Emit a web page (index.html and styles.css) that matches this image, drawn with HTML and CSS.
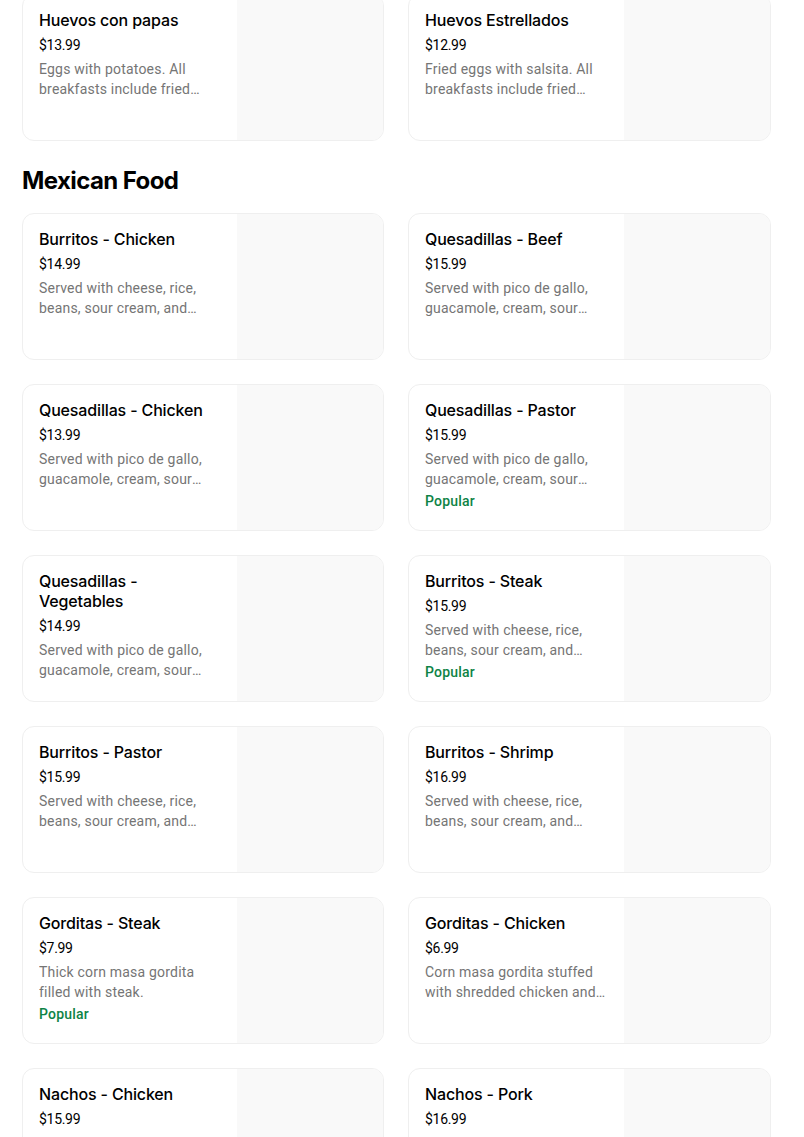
FILE: index.html
```html
<!DOCTYPE html>
<html lang="en">
<head>
<meta charset="utf-8">
<link rel="stylesheet" href="styles.css">
</head>
<body>
<main class="menu">
  <section class="grid grid-top">
    <article class="card">
      <div class="info">
        <h3 class="title">Huevos con papas</h3>
        <div class="price">$13.99</div>
        <p class="desc">Eggs with potatoes. All breakfasts include fried beans and tortillas.</p>
      </div>
      <div class="thumb"></div>
    </article>
    <article class="card">
      <div class="info">
        <h3 class="title">Huevos Estrellados</h3>
        <div class="price">$12.99</div>
        <p class="desc">Fried eggs with salsita. All breakfasts include fried beans and tortillas.</p>
      </div>
      <div class="thumb"></div>
    </article>
  </section>

  <h2 class="section-title">Mexican Food</h2>

  <section class="grid">
    <article class="card">
      <div class="info">
        <h3 class="title">Burritos - Chicken</h3>
        <div class="price">$14.99</div>
        <p class="desc">Served with cheese, rice, beans, sour cream, and lettuce.</p>
      </div>
      <div class="thumb"></div>
    </article>
    <article class="card">
      <div class="info">
        <h3 class="title">Quesadillas - Beef</h3>
        <div class="price">$15.99</div>
        <p class="desc">Served with pico de gallo, guacamole, cream, sour cream, and lettuce.</p>
      </div>
      <div class="thumb"></div>
    </article>
    <article class="card">
      <div class="info">
        <h3 class="title">Quesadillas - Chicken</h3>
        <div class="price">$13.99</div>
        <p class="desc">Served with pico de gallo, guacamole, cream, sour cream, and lettuce.</p>
      </div>
      <div class="thumb"></div>
    </article>
    <article class="card">
      <div class="info">
        <h3 class="title">Quesadillas - Pastor</h3>
        <div class="price">$15.99</div>
        <p class="desc">Served with pico de gallo, guacamole, cream, sour cream, and lettuce.</p>
        <div class="tag">Popular</div>
      </div>
      <div class="thumb"></div>
    </article>
    <article class="card">
      <div class="info">
        <h3 class="title">Quesadillas - Vegetables</h3>
        <div class="price">$14.99</div>
        <p class="desc">Served with pico de gallo, guacamole, cream, sour cream, and lettuce.</p>
      </div>
      <div class="thumb"></div>
    </article>
    <article class="card">
      <div class="info">
        <h3 class="title">Burritos - Steak</h3>
        <div class="price">$15.99</div>
        <p class="desc">Served with cheese, rice, beans, sour cream, and lettuce.</p>
        <div class="tag">Popular</div>
      </div>
      <div class="thumb"></div>
    </article>
    <article class="card">
      <div class="info">
        <h3 class="title">Burritos - Pastor</h3>
        <div class="price">$15.99</div>
        <p class="desc">Served with cheese, rice, beans, sour cream, and lettuce.</p>
      </div>
      <div class="thumb"></div>
    </article>
    <article class="card">
      <div class="info">
        <h3 class="title">Burritos - Shrimp</h3>
        <div class="price">$16.99</div>
        <p class="desc">Served with cheese, rice, beans, sour cream, and lettuce.</p>
      </div>
      <div class="thumb"></div>
    </article>
    <article class="card">
      <div class="info">
        <h3 class="title">Gorditas - Steak</h3>
        <div class="price">$7.99</div>
        <p class="desc">Thick corn masa gordita filled with steak.</p>
        <div class="tag">Popular</div>
      </div>
      <div class="thumb"></div>
    </article>
    <article class="card">
      <div class="info">
        <h3 class="title">Gorditas - Chicken</h3>
        <div class="price">$6.99</div>
        <p class="desc">Corn masa gordita stuffed with shredded chicken and cheese.</p>
      </div>
      <div class="thumb"></div>
    </article>
    <article class="card">
      <div class="info">
        <h3 class="title">Nachos - Chicken</h3>
        <div class="price">$15.99</div>
        <p class="desc">Tortilla chips with chicken, cheese, beans, and jalapeños.</p>
      </div>
      <div class="thumb"></div>
    </article>
    <article class="card">
      <div class="info">
        <h3 class="title">Nachos - Pork</h3>
        <div class="price">$16.99</div>
        <p class="desc">Tortilla chips with pork, cheese, beans, and jalapeños.</p>
      </div>
      <div class="thumb"></div>
    </article>
  </section>
</main>
</body>
</html>
```

FILE: styles.css
```css
* {
  box-sizing: border-box;
}

html, body {
  margin: 0;
  padding: 0;
  background: #ffffff;
}

body {
  font-family: "Inter", "Roboto", sans-serif;
  color: #000000;
  overflow: hidden;
}

.menu {
  width: 749px;
  margin-left: 22px;
}

.grid {
  display: grid;
  grid-template-columns: 362px 363px;
  column-gap: 24px;
  row-gap: 24px;
}

.grid-top {
  margin-top: -6px;
}

.section-title {
  margin: 24px 0 16px;
  font-size: 24px;
  line-height: 32px;
  font-weight: 700;
  letter-spacing: -0.6px;
}

.card {
  display: flex;
  height: 147px;
  border: 1px solid #efefef;
  border-radius: 12px;
  overflow: hidden;
  background: #ffffff;
}

.info {
  flex: 1;
  min-width: 0;
  padding: 15px 16px 0 16px;
}

.thumb {
  width: 146px;
  flex: none;
  background: #f9f9f9;
}

.title {
  margin: 0;
  font-size: 16px;
  line-height: 20px;
  font-weight: 500;
  letter-spacing: -0.15px;
  color: #000000;
}

.price {
  margin-top: 5px;
  font-family: "Roboto", sans-serif;
  font-size: 14px;
  line-height: 20px;
  letter-spacing: -0.3px;
  color: #000000;
}

.desc {
  margin: 4px 0 0;
  font-family: "Roboto", sans-serif;
  font-size: 14px;
  line-height: 20px;
  letter-spacing: 0.2px;
  color: #757575;
  display: -webkit-box;
  -webkit-line-clamp: 2;
  -webkit-box-orient: vertical;
  overflow: hidden;
}

.tag {
  margin-top: 2px;
  font-family: "Roboto", sans-serif;
  font-size: 14px;
  line-height: 20px;
  font-weight: 500;
  letter-spacing: 0.2px;
  color: #0e8345;
}
```
